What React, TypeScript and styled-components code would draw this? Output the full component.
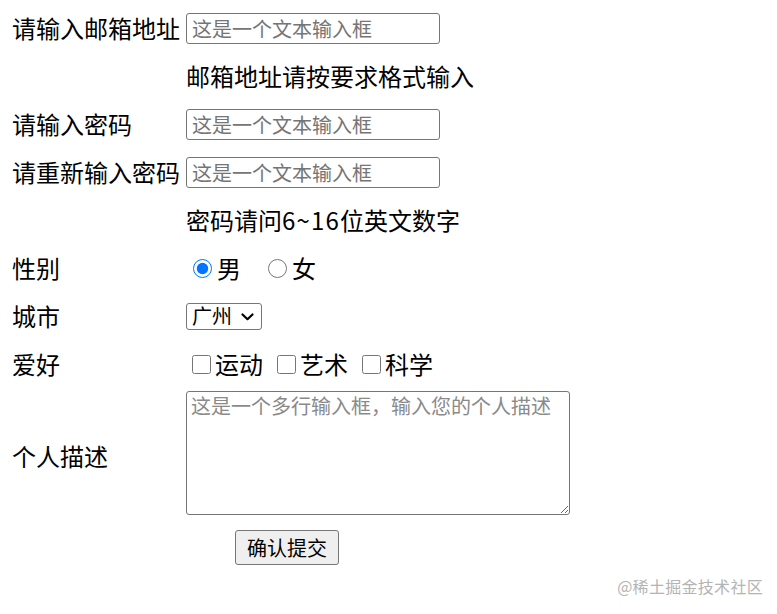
import React from "react";
import styled, { createGlobalStyle } from "styled-components";

const GlobalStyle = createGlobalStyle`
  html, body {
    margin: 0;
    padding: 0;
    background: #ffffff;
  }
  body {
    font-family: "Noto Sans CJK SC", "Noto Sans", sans-serif;
    font-size: 24px;
    color: #000000;
  }
`;

const Page = styled.div`
  position: relative;
  width: 777px;
  height: 614px;
  overflow: hidden;
`;

const Form = styled.form`
  display: flex;
  flex-direction: column;
  padding: 4px 0 0 12px;
`;

const Row = styled.div<{ $pad?: number }>`
  display: grid;
  grid-template-columns: 174px 1fr;
  align-items: center;
  min-height: 48px;
  padding: ${(p) => (p.$pad ? `${p.$pad}px 0` : "0")};
`;

const Label = styled.span<{ $shift?: number }>`
  font-size: 24px;
  line-height: 32px;
  white-space: nowrap;
  position: relative;
  top: ${(p) => p.$shift ?? 0}px;
`;

const Hint = styled.span`
  font-size: 24px;
  line-height: 32px;
  white-space: nowrap;
`;

const Digits = styled.span`
  letter-spacing: 1.2px;
`;

const TextInput = styled.input`
  box-sizing: border-box;
  width: 254px;
  height: 31px;
  border: 1px solid #767676;
  border-radius: 3px;
  padding: 0 5px;
  font-family: "Noto Sans CJK SC", sans-serif;
  font-size: 20px;
  color: #000;
  background: #fff;
  outline: none;
  &::placeholder {
    color: #757575;
  }
`;

const Options = styled.div`
  display: flex;
  align-items: center;
`;

const Choice = styled.label<{ $gap: number }>`
  display: flex;
  align-items: center;
  margin-left: ${(p) => p.$gap}px;
  font-size: 24px;
  line-height: 32px;
`;

const Radio = styled.input.attrs({ type: "radio" })`
  width: 19px;
  height: 19px;
  margin: 0 5px 0 0;
  accent-color: #0075ff;
`;

const Check = styled.input.attrs({ type: "checkbox" })`
  width: 19px;
  height: 19px;
  margin: 0 4px 0 0;
`;

const SelectWrap = styled.div`
  position: relative;
  display: inline-flex;
  align-items: center;
`;

const Select = styled.select`
  box-sizing: border-box;
  appearance: none;
  width: 76px;
  height: 27px;
  padding: 0 0 0 5px;
  border: 1px solid #767676;
  border-radius: 3px;
  background: #fff;
  color: #000;
  font-family: "Noto Sans CJK SC", sans-serif;
  font-size: 20px;
  line-height: 24px;
  outline: none;
`;

const Chevron = styled.svg`
  position: absolute;
  right: 8px;
  top: 10px;
  width: 13px;
  height: 8px;
  pointer-events: none;
`;

const TextArea = styled.textarea`
  box-sizing: border-box;
  width: 384px;
  height: 124px;
  padding: 1px 4px;
  border: 1px solid #767676;
  border-radius: 3px;
  font-family: "Noto Sans CJK SC", sans-serif;
  font-size: 20px;
  line-height: 26px;
  resize: both;
  outline: none;
  &::placeholder {
    color: #8a8a8a;
  }
`;

const ButtonRow = styled.div`
  display: grid;
  grid-template-columns: 174px 1fr;
  margin-top: 12px;
`;

const Submit = styled.button`
  grid-column: 2;
  justify-self: start;
  margin-left: 49px;
  box-sizing: border-box;
  width: 104px;
  height: 35px;
  padding: 0;
  border: 1px solid #767676;
  border-radius: 3px;
  background: #efefef;
  color: #000;
  font-family: "Noto Sans CJK SC", sans-serif;
  font-size: 20px;
  line-height: 33px;
`;

const Watermark = styled.div`
  position: absolute;
  right: 14px;
  top: 575px;
  font-family: "Noto Sans CJK SC", sans-serif;
  font-size: 16px;
  line-height: 22px;
  color: #b4b4b4;
  letter-spacing: 0.3px;
`;

export default function App() {
  return (
    <Page>
      <GlobalStyle />
      <Form onSubmit={(e) => e.preventDefault()}>
        <Row>
          <Label>请输入邮箱地址</Label>
          <TextInput type="text" placeholder="这是一个文本输入框" />
        </Row>
        <Row>
          <span />
          <Hint>邮箱地址请按要求格式输入</Hint>
        </Row>
        <Row>
          <Label>请输入密码</Label>
          <TextInput type="password" placeholder="这是一个文本输入框" />
        </Row>
        <Row>
          <Label>请重新输入密码</Label>
          <TextInput type="password" placeholder="这是一个文本输入框" />
        </Row>
        <Row>
          <span />
          <Hint>
            密码请问<Digits>6~16</Digits>位英文数字
          </Hint>
        </Row>
        <Row>
          <Label>性别</Label>
          <Options>
            <Choice $gap={7}>
              <Radio name="sex" defaultChecked />男
            </Choice>
            <Choice $gap={27}>
              <Radio name="sex" />女
            </Choice>
          </Options>
        </Row>
        <Row>
          <Label>城市</Label>
          <Options>
            <SelectWrap>
              <Select defaultValue="gz">
                <option value="gz">广州</option>
                <option value="sz">深圳</option>
                <option value="bj">北京</option>
              </Select>
              <Chevron viewBox="0 0 13 8">
                <path
                  d="M1.5 1.5 L6.5 6.2 L11.5 1.5"
                  fill="none"
                  stroke="#000"
                  strokeWidth="2.2"
                  strokeLinecap="round"
                  strokeLinejoin="round"
                />
              </Chevron>
            </SelectWrap>
          </Options>
        </Row>
        <Row>
          <Label>爱好</Label>
          <Options>
            <Choice $gap={6}>
              <Check />运动
            </Choice>
            <Choice $gap={14}>
              <Check />艺术
            </Choice>
            <Choice $gap={14}>
              <Check />科学
            </Choice>
          </Options>
        </Row>
        <Row $pad={3}>
          <Label $shift={3}>个人描述</Label>
          <TextArea placeholder="这是一个多行输入框，输入您的个人描述" />
        </Row>
        <ButtonRow>
          <Submit type="submit">确认提交</Submit>
        </ButtonRow>
      </Form>
      <Watermark>@稀土掘金技术社区</Watermark>
    </Page>
  );
}
